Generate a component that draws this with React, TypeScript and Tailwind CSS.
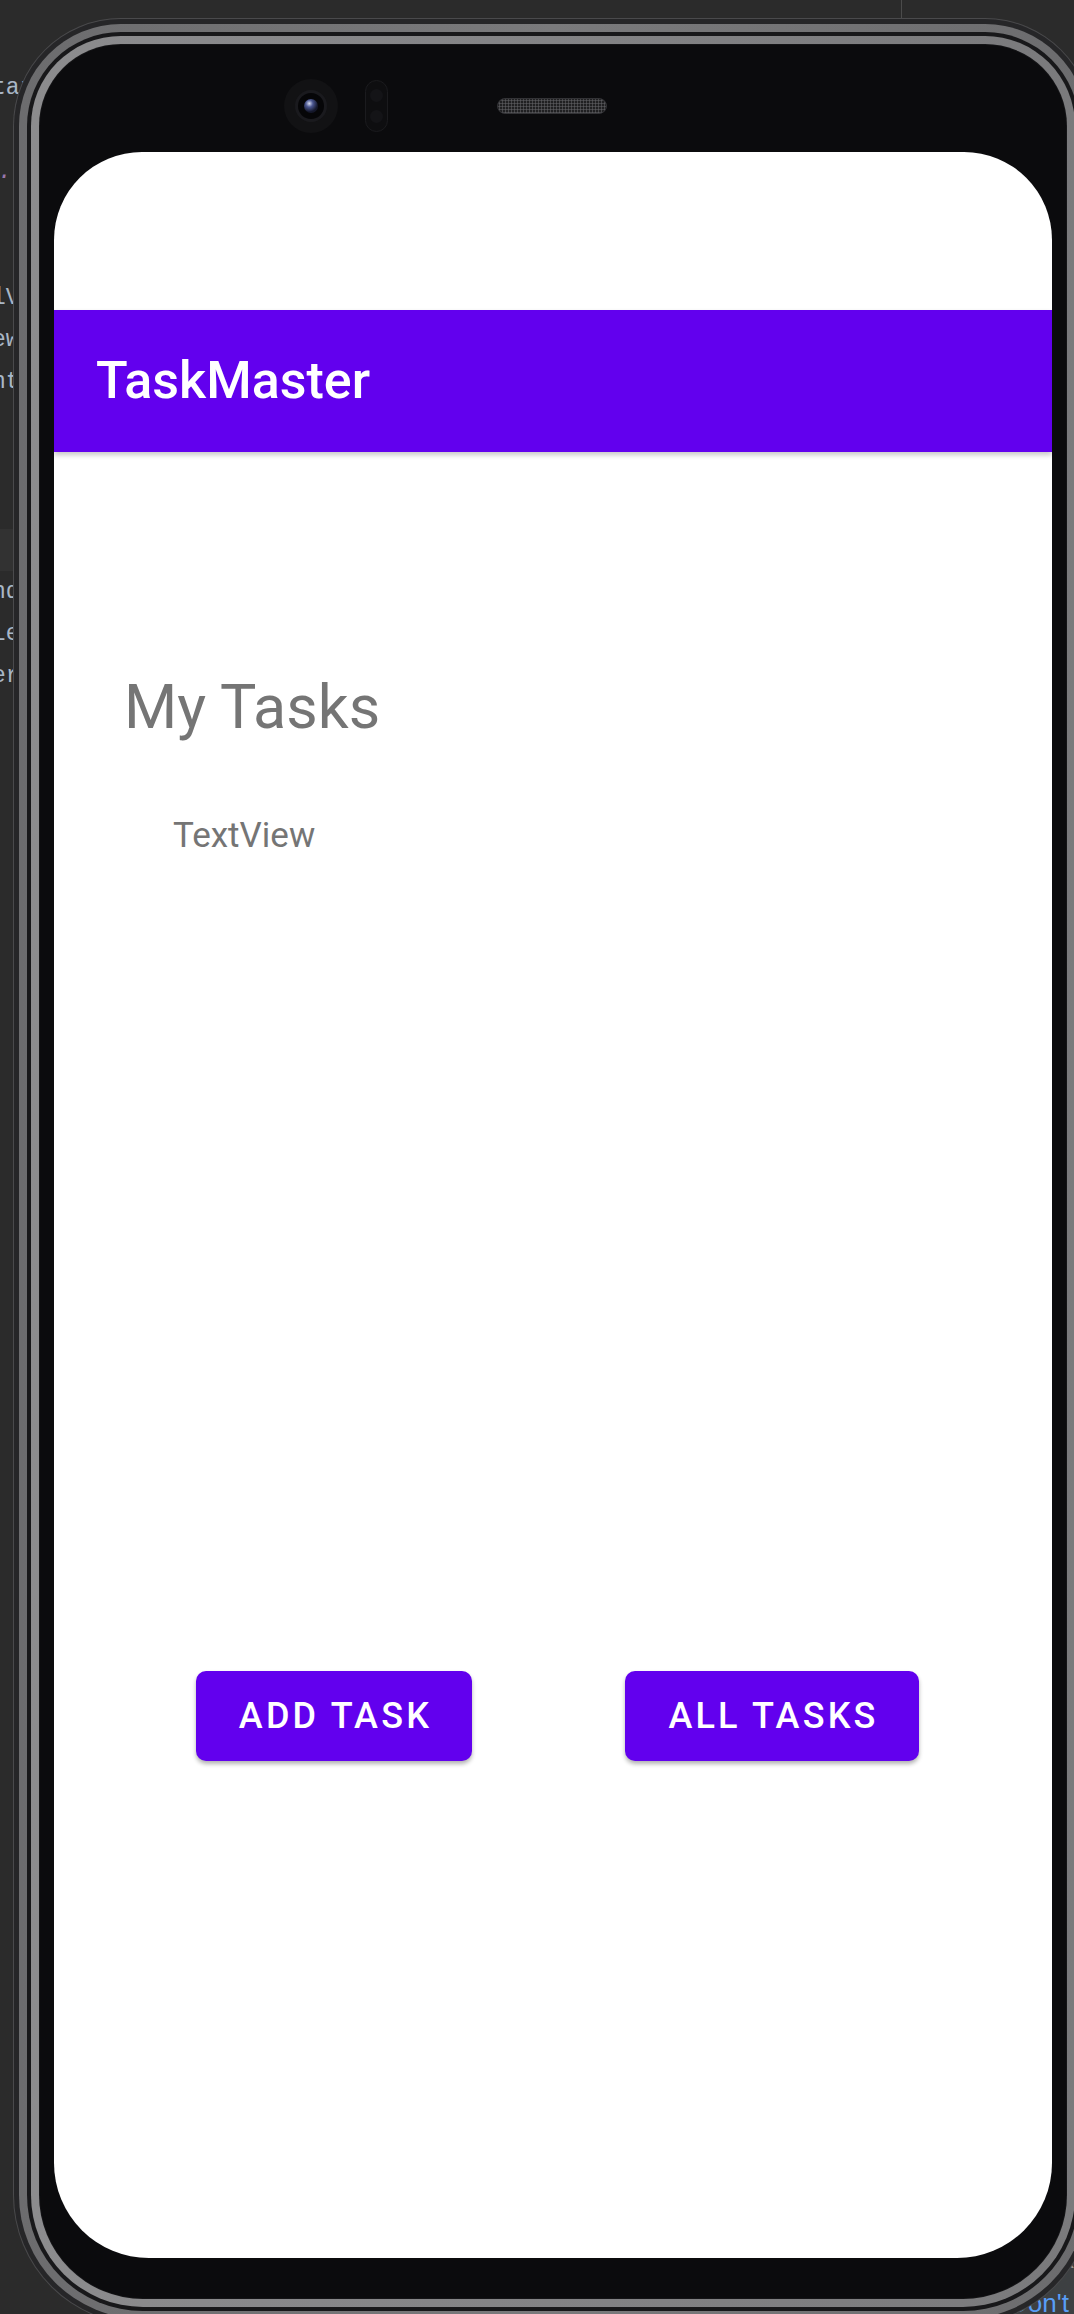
import React from 'react';

type CodeLine = { text: string; purple?: boolean; band?: boolean };

// editor lines peeking out from behind the emulator
const codeLines: CodeLine[] = [
    { text: 'tart="16dp"' },
    { text: '' },
    { text: '.r', purple: true },
    { text: '' },
    { text: '' },
    { text: 'lV' },
    { text: 'ew' },
    { text: 'nt' },
    { text: '' },
    { text: '' },
    { text: '' },
    { text: '', band: true },
    { text: 'nd' },
    { text: 'Le' },
    { text: 'er' },
];

const Camera = () => (
    <div className="w-[54px] h-[54px] rounded-full bg-[#121214] flex items-center justify-center">
        <div className="w-[32px] h-[32px] rounded-full bg-[#060608] border-[3px] border-[#1a1a1e] flex items-center justify-center">
            <div className="w-[14px] h-[14px] rounded-full bg-[radial-gradient(circle_at_38%_32%,#d8dcf0_0,#4a5690_28%,#14172a_65%)]" />
        </div>
    </div>
);

const Sensor = () => (
    <div className="w-[23px] h-[52px] rounded-full bg-[#0e0e10] border border-[#1b1b1e] flex flex-col items-center justify-around py-[4px]">
        <div className="w-[13px] h-[13px] rounded-full bg-[#141417]" />
        <div className="w-[13px] h-[13px] rounded-full bg-[#141417]" />
    </div>
);

const AppButton = ({ label, width }: { label: string; width: string }) => (
    <button
        className={`${width} h-[90px] rounded-[10px] bg-[#6200ee] text-white text-[36px] font-medium tracking-[3.2px] pl-[3px] shadow-[0_3px_4px_rgba(0,0,0,0.3)]`}
    >
        {label}
    </button>
);

export default function App() {
    return (
        <div className="relative w-[1074px] h-[2314px] overflow-hidden bg-[#2b2b2b]">
            {/* IDE behind the emulator */}
            <div className="h-full flex flex-col">
                <div className="h-[18px] shrink-0 flex">
                    <div className="ml-[901px] w-px bg-[#4b4b4b]" />
                </div>
                <div className="mt-[49px] flex flex-col font-['Liberation_Mono',monospace] text-[23px]">
                    {codeLines.map((line, i) => (
                        <div
                            key={i}
                            className={`h-[42px] flex items-center whitespace-nowrap ${line.band ? 'bg-[#323232]' : ''} ${line.purple ? 'text-[#9876aa] italic' : 'text-[#a9b7c6]'}`}
                        >
                            <span className={line.purple ? '-ml-[2px]' : '-ml-[8px]'}>{line.text}</span>
                        </div>
                    ))}
                </div>
                <div className="mt-auto h-[76px] flex justify-end">
                    <div className="w-[67px] bg-[#3d4042] flex flex-col font-['Liberation_Sans',sans-serif] leading-none">
                        <div className="mt-[12px] text-right text-[22px] text-[#9a9a9a]">x</div>
                        <div className="mt-[18px] pl-[2px] text-[26px] text-[#589df6]">Don't</div>
                    </div>
                </div>
            </div>

            {/* emulator window */}
            <div className="absolute left-[13px] top-[18px] w-[1080px] h-[2307px] rounded-t-[108px] rounded-b-[130px] bg-[#4a4a4c] p-px">
                <div className="h-full rounded-t-[107px] rounded-b-[129px] bg-[#262628] p-[5px]">
                    <div className="h-full rounded-t-[102px] rounded-b-[124px] bg-linear-to-r from-[#6c6c6e] via-[#7a7a7c] to-[#6c6c6e] p-[8px]">
                        <div className="h-full rounded-t-[94px] rounded-b-[116px] bg-[#18181a] p-[4px]">
                            <div className="h-full rounded-t-[90px] rounded-b-[112px] bg-linear-to-r from-[#8c8c8e] to-[#7a7a7c] p-[8px]">
                                <div className="h-full rounded-t-[82px] rounded-b-[104px] bg-[#141416] p-px">
                                    <div className="h-full flex flex-col rounded-t-[81px] rounded-b-[103px] bg-[#0b0b0d] px-[14px]">
                                        <div className="h-[107px] shrink-0 flex items-center pt-[14px] pl-[230px]">
                                            <Camera />
                                            <div className="ml-[27px]">
                                                <Sensor />
                                            </div>
                                            <div className="ml-[109px] w-[110px] h-[16px] rounded-full border border-[#333336] bg-[#202022] bg-[radial-gradient(circle,#56565a_0.9px,transparent_1.2px)] bg-[length:3px_3px]" />
                                        </div>

                                        {/* screen */}
                                        <div className="flex-1 flex flex-col rounded-t-[88px] rounded-b-[95px] bg-white overflow-hidden font-['Roboto',sans-serif]">
                                            <div className="h-[158px] shrink-0" />
                                            <div className="relative z-10 h-[142px] shrink-0 flex items-center pl-[42px] bg-[#6200ee] shadow-[0_3px_5px_rgba(0,0,0,0.22)]">
                                                <span className="text-[52px] font-medium leading-none text-white">TaskMaster</span>
                                            </div>
                                            <div className="pl-[70px] pt-[225px]">
                                                <div className="text-[61px] leading-none text-[#757575]">My Tasks</div>
                                                <div className="mt-[80px] pl-[49px] text-[35px] leading-none text-[#757575]">TextView</div>
                                            </div>
                                            <div className="mt-[818px] flex pl-[142px] gap-[153px]">
                                                <AppButton label="ADD TASK" width="w-[276px]" />
                                                <AppButton label="ALL TASKS" width="w-[294px]" />
                                            </div>
                                        </div>

                                        <div className="h-[40px] shrink-0" />
                                    </div>
                                </div>
                            </div>
                        </div>
                    </div>
                </div>
            </div>
        </div>
    );
}
